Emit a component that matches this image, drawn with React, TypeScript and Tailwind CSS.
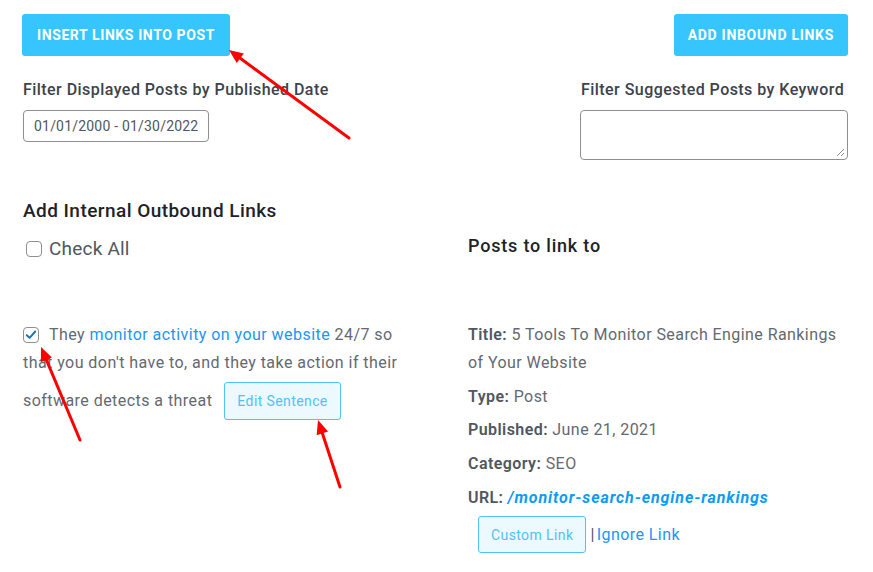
import React from "react";

function Box({ checked }: { checked?: boolean }) {
  return (
    <span className="inline-flex h-4 w-4 shrink-0 items-center justify-center rounded-[4px] border border-[#8c8f94] bg-white align-middle">
      {checked && (
        <svg viewBox="0 0 16 16" className="h-[14px] w-[14px]">
          <path d="M3.2 8.2 L6.4 11.2 L12.8 4" fill="none" stroke="#2271b1" strokeWidth="2.2" strokeLinecap="round" strokeLinejoin="round" />
        </svg>
      )}
    </span>
  );
}

function Arrow({ x1, y1, x2, y2 }: { x1: number; y1: number; x2: number; y2: number }) {
  const ang = Math.atan2(y2 - y1, x2 - x1);
  const L = 14;
  const W = 6;
  const bx = x2 - L * Math.cos(ang);
  const by = y2 - L * Math.sin(ang);
  const px = -Math.sin(ang) * W;
  const py = Math.cos(ang) * W;
  return (
    <g>
      <line x1={x1} y1={y1} x2={bx} y2={by} stroke="#ff0000" strokeWidth="3" strokeLinecap="round" />
      <polygon points={`${x2},${y2} ${bx + px},${by + py} ${bx - px},${by - py}`} fill="#ff0000" />
    </g>
  );
}

export default function App() {
  return (
    <div
      className="relative h-[572px] w-[873px] overflow-hidden bg-white text-[#646970]"
      style={{ fontFamily: "Roboto, 'Liberation Sans', sans-serif" }}
    >
      <div className="pl-[22px] pr-[25px] pt-[14px]">
        <div className="flex items-start justify-between">
          <button className="h-[42px] rounded-[3px] bg-[#36c6fd] px-[15px] text-[14px] font-bold uppercase tracking-[0.6px] text-white">
            Insert Links Into Post
          </button>
          <button className="h-[42px] rounded-[3px] bg-[#36c6fd] px-[14px] text-[14px] font-bold uppercase tracking-[0.7px] text-white">
            Add Inbound Links
          </button>
        </div>

        <div className="mt-[25px] flex items-start justify-between">
          <div className="pl-[1px]">
            <div className="text-[16px] font-medium leading-[18px] tracking-[0.45px] text-[#3c434a]">
              Filter Displayed Posts by Published Date
            </div>
            <div className="mt-[11px] flex h-[32px] w-[186px] items-center whitespace-nowrap rounded-[4px] border border-[#8c8f94] px-[10px] text-[14px] tracking-[0.2px] text-[#50575e]">
              01/01/2000 - 01/30/2022
            </div>
          </div>
          <div className="w-[268px]">
            <div className="pl-[1px] text-[16px] font-medium leading-[18px] tracking-[0.45px] text-[#3c434a]">
              Filter Suggested Posts by Keyword
            </div>
            <div className="relative mt-[11px] h-[50px] w-[268px] rounded-[4px] border border-[#8c8f94]">
              <svg className="absolute bottom-[2px] right-[2px]" width="9" height="9" viewBox="0 0 9 9">
                <line x1="1" y1="8" x2="8" y2="1" stroke="#8c8f94" strokeWidth="1" />
                <line x1="5" y1="8" x2="8" y2="5" stroke="#8c8f94" strokeWidth="1" />
              </svg>
            </div>
          </div>
        </div>

        <div className="mt-[39px] pl-[1px] text-[19px] font-medium leading-[24px] tracking-[0.45px] text-[#1d2327]">
          Add Internal Outbound Links
        </div>

        <div className="grid grid-cols-[446px_1fr]">
          <div className="flex items-center gap-[7px] pl-[4px] pt-[14px]">
            <Box />
            <span className="text-[19px] leading-[24px] tracking-[0.2px] text-[#50575e]">Check All</span>
          </div>
          <div className="pt-[11px] text-[18px] font-medium leading-[24px] tracking-[0.8px] text-[#1d2327]">Posts to link to</div>

          <div className="pl-[1px] pt-[60px] text-[16px] leading-[28px] tracking-[0.45px]">
            <span className="mr-[10px] inline-flex align-[-2px]">
              <Box checked />
            </span>
            They <span className="text-[#2196f3]">monitor activity on your website</span> 24/7 so
            <br />
            that you don't have to, and they take action if their
            <br />
            <span className="mt-[1px] inline-flex items-center">
              <span className="pt-[4px]">software detects a threat</span>
              <span className="ml-[12px] mt-[4px] inline-flex h-[38px] items-center rounded-[3px] border border-[#4fc3f7] bg-[#ecf9ff] px-[12px] text-[14px] tracking-[0.4px] text-[#4fc3f7]">
                Edit Sentence
              </span>
            </span>
          </div>

          <div className="pt-[60px] text-[16px] leading-[28px] tracking-[0.43px]">
            <div>
              <b className="font-semibold text-[#50575e]">Title:</b> 5 Tools To Monitor Search Engine Rankings
              <br />
              of Your Website
            </div>
            <div className="mt-[6px]">
              <b className="font-semibold text-[#50575e]">Type:</b> Post
            </div>
            <div className="mt-[5px]">
              <b className="font-semibold text-[#50575e]">Published:</b> June 21, 2021
            </div>
            <div className="mt-[6px]">
              <b className="font-semibold text-[#50575e]">Category:</b> SEO
            </div>
            <div className="mt-[6px]">
              <b className="font-semibold text-[#50575e]">URL:</b>{" "}
              <span className="font-bold italic tracking-[0.9px] text-[#0e9bf2]">/monitor-search-engine-rankings</span>
            </div>
            <div className="flex items-center pl-[10px] pt-[4px]">
              <span className="inline-flex h-[37px] items-center rounded-[3px] border border-[#4fc3f7] bg-[#ecf9ff] px-[12px] text-[14px] tracking-[0.4px] text-[#4fc3f7]">
                Custom Link
              </span>
              <span className="ml-[4px] text-[#50575e]">|</span>
              <span className="ml-[2px] text-[#2196f3]">Ignore Link</span>
            </div>
          </div>
        </div>
      </div>

      <svg className="pointer-events-none absolute left-0 top-0" width="873" height="572">
        <Arrow x1={349} y1={138} x2={229} y2={50} />
        <Arrow x1={80} y1={440} x2={41} y2={347} />
        <Arrow x1={340} y1={487} x2={318} y2={420} />
      </svg>
    </div>
  );
}
